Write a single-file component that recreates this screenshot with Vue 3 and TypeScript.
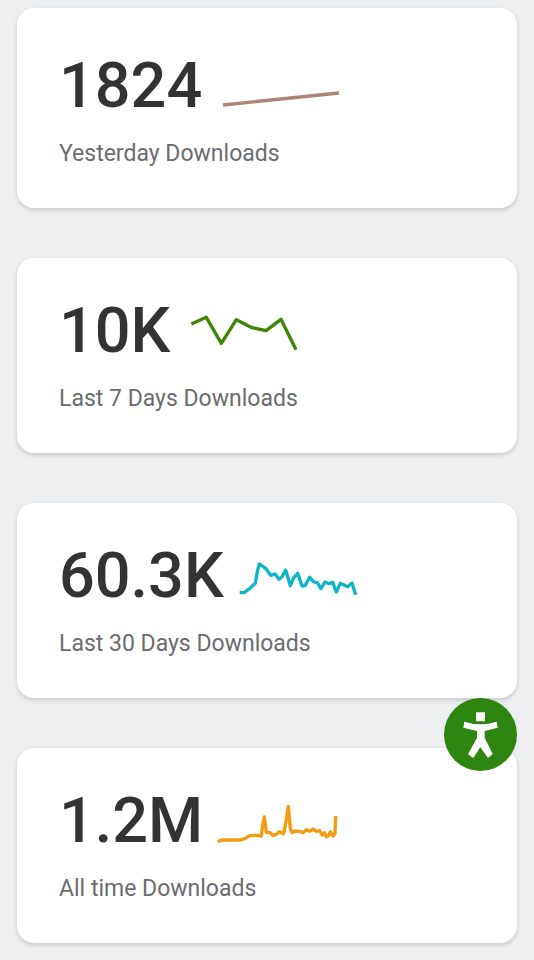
<script setup lang="ts">
interface Stat {
  value: string
  label: string
  color: string
  viewBox: string
  points: string
}

const stats: Stat[] = [
  {
    value: '1824',
    label: 'Yesterday Downloads',
    color: '#ab8476',
    viewBox: '12 -30 378 153',
    points: '39,105 387,69',
  },
  {
    value: '10K',
    label: 'Last 7 Days Downloads',
    color: '#3f8508',
    viewBox: '6 15 378 153',
    points: '34,72 79,52 124,130 169,59 213,82 258,92 303,58 348,149',
  },
  {
    value: '60.3K',
    label: 'Last 30 Days Downloads',
    color: '#0fb5c9',
    viewBox: '18 0 378 153',
    points:
      '29,128 42,128 60,115 76,100 82,65 88,42 108,56 122,76 135,72 147,88 156,80 167,60 181,107 192,82 203,70 216,108 225,107 239,82 250,95 262,98 273,116 285,96 297,101 308,97 319,126 331,100 353,110 366,99 377,134',
  },
  {
    value: '1.2M',
    label: 'All time Downloads',
    color: '#f39c12',
    viewBox: '14 0 378 153',
    points:
      '22,140 35,135 92,135 105,130 118,122 140,121 153,123 157,90 162,66 168,112 178,113 188,121 198,118 208,110 220,116 227,80 234,34 240,100 245,113 255,108 270,110 278,113 288,104 298,109 309,102 318,109 328,107 336,120 342,113 348,125 354,122 360,110 368,123 374,116 376,63',
  },
]
</script>

<template>
  <main class="page">
    <section v-for="stat in stats" :key="stat.label" class="card">
      <div class="figure">
        <span class="value">{{ stat.value }}</span>
        <svg class="spark" :viewBox="stat.viewBox" aria-hidden="true">
          <polyline
            :points="stat.points"
            :stroke="stat.color"
            fill="none"
            stroke-width="10"
            stroke-linejoin="round"
          />
        </svg>
      </div>
      <p class="label">{{ stat.label }}</p>
    </section>

    <button class="access" type="button" aria-label="Accessibility">
      <svg viewBox="42 39 219 219" aria-hidden="true">
        <path
          fill="#fff"
          d="M138 82h27v27h-27zM103 110Q152 126 200 110L203 128L164 138V158L188 207L174 219L151 187L130 219L114 208L141 158V138L100 128Z"
        />
      </svg>
    </button>
  </main>
</template>

<style>
body {
  background: #edeef0;
}
</style>

<style scoped>
.page {
  display: flex;
  flex-direction: column;
  gap: 50px;
  padding: 8px 17px 17px;
  font-family: Roboto, "Liberation Sans", sans-serif;
}

.card {
  padding: 36px 42px 40px;
  background: #fff;
  border-radius: 17px;
  box-shadow: 0 2px 4px rgba(0, 0, 0, 0.16);
}

.card:first-child {
  padding-top: 41px;
}

.figure {
  display: flex;
  align-items: center;
  gap: 12px;
}

.value {
  font-size: 63px;
  line-height: 73px;
  font-weight: 500;
  color: #333;
}

.spark {
  width: 126px;
  height: 51px;
}

.label {
  margin: 18px 0 0;
  font-size: 23px;
  line-height: 28px;
  color: #6b6c6f;
}

.access {
  position: fixed;
  right: 17px;
  bottom: 189px;
  width: 73px;
  height: 73px;
  padding: 0;
  border: 0;
  border-radius: 50%;
  background: #2d850f;
  cursor: pointer;
}

.access svg {
  display: block;
  width: 100%;
  height: 100%;
}
</style>
